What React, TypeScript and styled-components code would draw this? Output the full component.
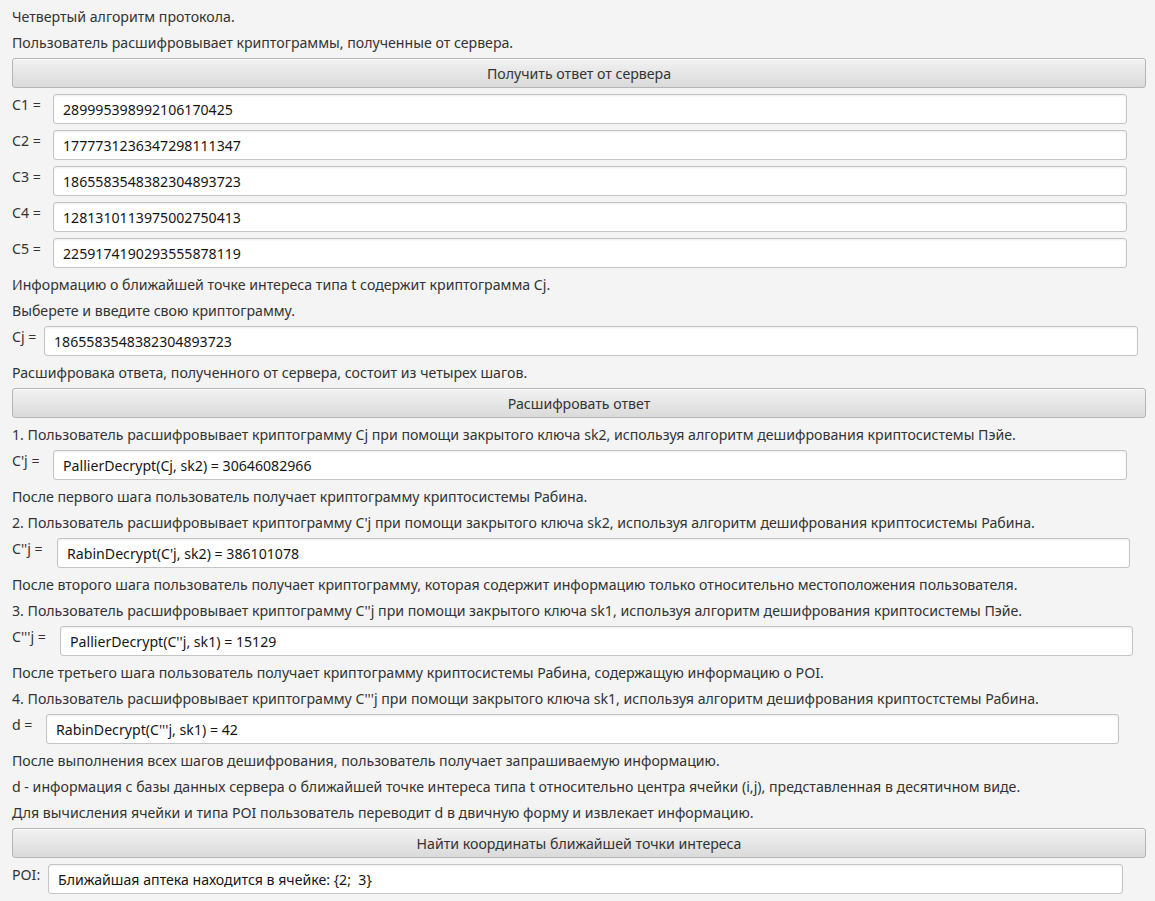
import React from "react";
import styled, { createGlobalStyle } from "styled-components";

const GlobalStyle = createGlobalStyle`
  html, body {
    margin: 0;
    padding: 0;
    background: #f4f4f4;
  }
  body {
    font-family: "Noto Sans", "Open Sans", sans-serif;
    font-size: 14.15px;
    color: #333333;
  }
`;

const Page = styled.div`
  display: flex;
  flex-direction: column;
  gap: 6px;
  width: 1134px;
  padding: 6px 9px 6px 12px;
  min-height: 901px;
  box-sizing: content-box;
  background: #f4f4f4;
`;

const Line = styled.div`
  height: 20px;
  line-height: 22px;
  white-space: nowrap;
`;

const ActionButton = styled.button`
  height: 30px;
  width: 100%;
  font-family: inherit;
  font-size: inherit;
  color: #333333;
  border: 1px solid #b5b5b5;
  border-radius: 3px;
  background: linear-gradient(to bottom, #f2f2f2 0%, #e6e6e6 50%, #dadada 100%);
  box-shadow: inset 0 1px 0 #fafafa;
  padding: 0;
  cursor: pointer;
`;

const Row = styled.div`
  display: flex;
  align-items: flex-start;
  height: 30px;
`;

const Label = styled.span<{ $w: number }>`
  flex: none;
  width: ${(p) => p.$w}px;
  height: 20px;
  line-height: 22px;
  white-space: nowrap;
`;

const Field = styled.input<{ $w: number }>`
  flex: none;
  width: ${(p) => p.$w}px;
  height: 30px;
  box-sizing: border-box;
  padding: 0 9px;
  font-family: inherit;
  font-size: inherit;
  color: #161616;
  background: #ffffff;
  border: 1px solid #c4c4c4;
  border-radius: 3px;
  box-shadow: inset 0 1px 2px rgba(0, 0, 0, 0.07);
  outline: none;
`;

type FieldRowProps = { label: string; value: string; offset: number; width?: number };

function FieldRow({ label, value, offset, width = 1074 }: FieldRowProps) {
  return (
    <Row>
      <Label $w={offset}>{label}</Label>
      <Field $w={width} value={value} readOnly />
    </Row>
  );
}

export default function App() {
  return (
    <>
      <GlobalStyle />
      <Page>
        <Line>Четвертый алгоритм протокола.</Line>
        <Line>Пользователь расшифровывает криптограммы, полученные от сервера.</Line>
        <ActionButton>Получить ответ от сервера</ActionButton>
        <FieldRow label="C1 =" value="289995398992106170425" offset={41} />
        <FieldRow label="C2 =" value="1777731236347298111347" offset={41} />
        <FieldRow label="C3 =" value="1865583548382304893723" offset={41} />
        <FieldRow label="C4 =" value="1281310113975002750413" offset={41} />
        <FieldRow label="C5 =" value="2259174190293555878119" offset={41} />
        <Line>Информацию о ближайшей точке интереса типа t содержит криптограмма Cj.</Line>
        <Line>Выберете и введите свою криптограмму.</Line>
        <FieldRow label="Cj =" value="1865583548382304893723" offset={32} width={1094} />
        <Line>Расшифровака ответа, полученного от сервера, состоит из четырех шагов.</Line>
        <ActionButton>Расшифровать ответ</ActionButton>
        <Line>
          1. Пользователь расшифровывает криптограмму Cj при помощи закрытого ключа sk2, используя алгоритм
          дешифрования криптосистемы Пэйе.
        </Line>
        <FieldRow label="C'j =" value="PallierDecrypt(Cj, sk2) = 30646082966" offset={41} />
        <Line>После первого шага пользователь получает криптограмму криптосистемы Рабина.</Line>
        <Line>
          2. Пользователь расшифровывает криптограмму C'j при помощи закрытого ключа sk2, используя алгоритм
          дешифрования криптосистемы Рабина.
        </Line>
        <FieldRow label="C''j =" value="RabinDecrypt(C'j, sk2) = 386101078" offset={45} width={1073} />
        <Line>
          После второго шага пользователь получает криптограмму, которая содержит информацию только относительно
          местоположения пользователя.
        </Line>
        <Line>
          3. Пользователь расшифровывает криптограмму C''j при помощи закрытого ключа sk1, используя алгоритм
          дешифрования криптосистемы Пэйе.
        </Line>
        <FieldRow label="C'''j =" value="PallierDecrypt(C''j, sk1) = 15129" offset={48} width={1073} />
        <Line>После третьего шага пользователь получает криптограмму криптосистемы Рабина, содержащую информацию о POI.</Line>
        <Line>
          4. Пользователь расшифровывает криптограмму C'''j при помощи закрытого ключа sk1, используя алгоритм
          дешифрования криптостстемы Рабина.
        </Line>
        <FieldRow label="d =" value="RabinDecrypt(C'''j, sk1) = 42" offset={34} width={1073} />
        <Line>После выполнения всех шагов дешифрования, пользователь получает запрашиваемую информацию.</Line>
        <Line>
          d - информация с базы данных сервера о ближайшей точке интереса типа t относительно центра ячейки (i,j),
          представленная в десятичном виде.
        </Line>
        <Line>Для вычисления ячейки и типа POI пользователь переводит d в двичную форму и извлекает информацию.</Line>
        <ActionButton>Найти координаты ближайшей точки интереса</ActionButton>
        <FieldRow label="POI:" value="Ближайшая аптека находится в ячейке: {2;  3}" offset={36} width={1075} />
      </Page>
    </>
  );
}
